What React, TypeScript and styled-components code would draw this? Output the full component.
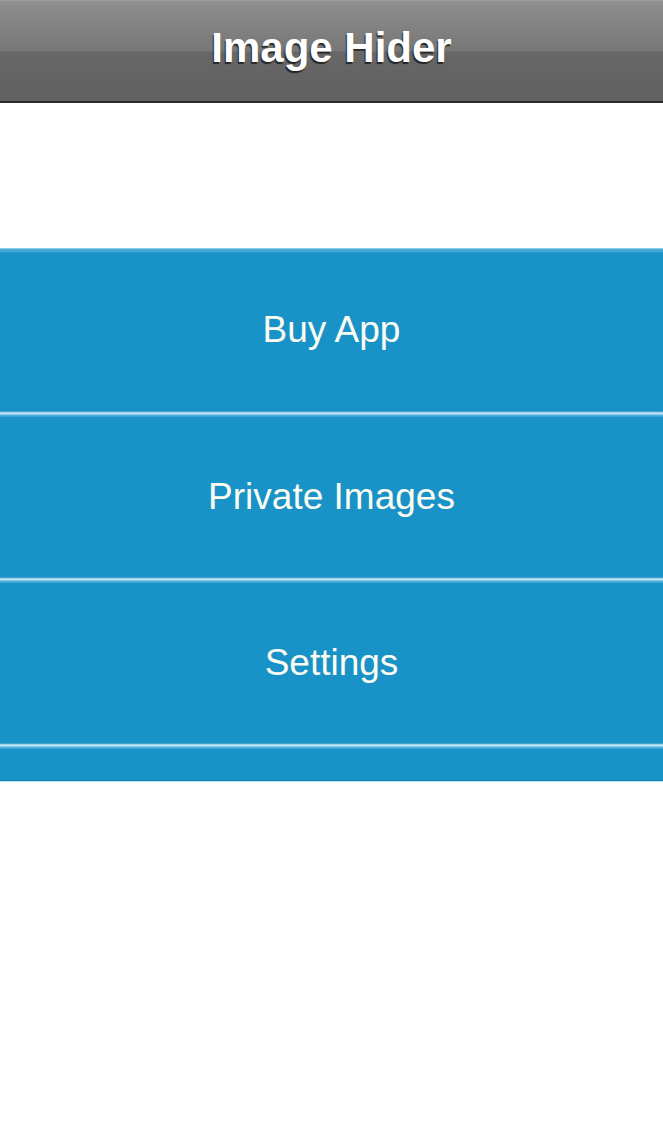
import React from "react";
import styled, { createGlobalStyle } from "styled-components";

const Global = createGlobalStyle`
  html, body {
    margin: 0;
    padding: 0;
    background: #ffffff;
  }
  body {
    font-family: "Liberation Sans", Arial, Helvetica, sans-serif;
  }
`;

const Page = styled.div`
  width: 663px;
  min-height: 1136px;
  background: #ffffff;
`;

const NavBar = styled.header`
  height: 101px;
  border-bottom: 2px solid #2b2b2b;
  display: flex;
  align-items: center;
  justify-content: center;
  background: linear-gradient(
    to bottom,
    #a0a0a0 0px,
    #8f8f8f 2px,
    #858585 20px,
    #777777 51px,
    #676767 52px,
    #616161 101px
  );
`;

const Title = styled.h1`
  margin: 0;
  padding-bottom: 6px;
  font-size: 42px;
  font-weight: bold;
  color: #ffffff;
  text-shadow: -1px 2px 1px rgba(0, 0, 0, 0.65);
`;

const Menu = styled.nav`
  margin-top: 145px;
  display: flex;
  flex-direction: column;
  background: #1993c7;
  border-top: 1px solid #8ccbe8;
`;

const Row = styled.div<{ $first?: boolean }>`
  height: ${(p) => (p.$first ? 162 : 160)}px;
  display: flex;
  align-items: center;
  justify-content: center;
  background: ${(p) =>
    p.$first
      ? "linear-gradient(to bottom, #4fadd8 0px, #3aa2d2 3px, #1993c7 4px, #1993c7 100%)"
      : "#1993c7"};
  font-size: 37px;
  color: #fbfcf2;
`;

const Separator = styled.div`
  height: 6px;
  background: linear-gradient(
    to bottom,
    #1786b8 0px,
    #6bbde2 1px,
    #d2eaf5 2px,
    #b5def1 3px,
    #5cb6de 4px,
    #3ba5d5 5px
  );
`;

const Filler = styled.div`
  height: 31px;
  background: #1993c7;
  border-bottom: 1px solid #137fb0;
  box-shadow: 0 1px 0 #b8def0;
`;

const items = ["Buy App", "Private Images", "Settings"];

const App = () => {
  return (
    <Page>
      <Global />
      <NavBar>
        <Title>Image Hider</Title>
      </NavBar>
      <Menu>
        {items.map((label, i) => (
          <React.Fragment key={label}>
            <Row $first={i === 0}>{label}</Row>
            <Separator />
          </React.Fragment>
        ))}
        <Filler />
      </Menu>
    </Page>
  );
};

export default App;
